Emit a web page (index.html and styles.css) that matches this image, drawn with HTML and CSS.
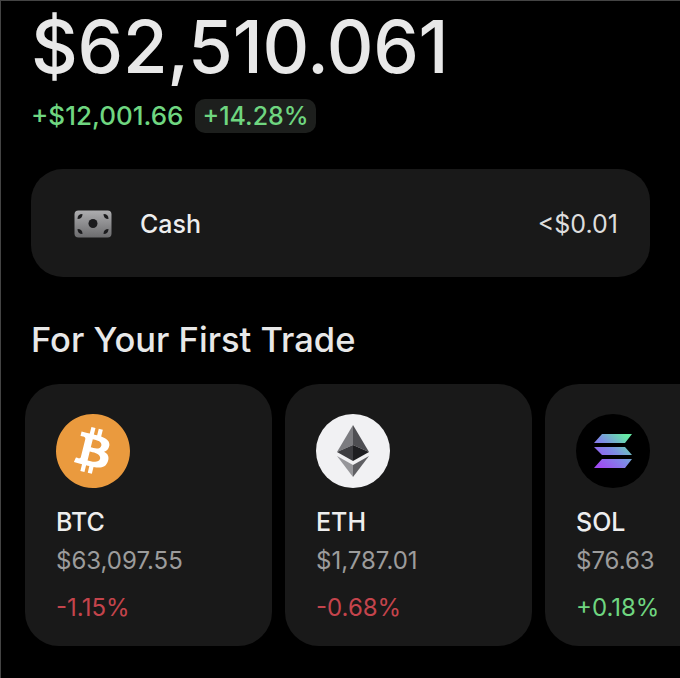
FILE: index.html
```html
<!DOCTYPE html>
<html lang="en">
<head>
  <meta charset="UTF-8">
  <meta name="viewport" content="width=device-width, initial-scale=1">
  <title>Portfolio</title>
  <link rel="stylesheet" href="styles.css">
</head>
<body>

  <!-- Balance -->
  <div class="balance">
    <div class="balance-value">$62,510.061</div>
    <div class="balance-change">
      <span class="change-amount">+$12,001.66</span>
      <span class="change-pill">+14.28%</span>
    </div>
  </div>

  <!-- Cash -->
  <div class="cash">
    <svg class="cash-icon" width="38" height="28" viewBox="0 0 38 28">
      <defs>
        <linearGradient id="bill" x1="0" y1="0" x2="0" y2="1">
          <stop offset="0" stop-color="#adadaf"/>
          <stop offset="1" stop-color="#6c6c6e"/>
        </linearGradient>
      </defs>
      <rect x="0.5" y="0.5" width="37" height="27" rx="4" fill="url(#bill)"/>
      <circle cx="19" cy="13.500" r="4.500" fill="#1b1b1d"/>
      <path d="M3.500 9 Q3.500 4 8.500 4 Q8.500 9 3.500 9Z M34.500 9 Q34.500 4 29.500 4 Q29.500 9 34.500 9Z M3.500 19 Q3.500 24 8.500 24 Q8.500 19 3.500 19Z M34.500 19 Q34.500 24 29.500 24 Q29.500 19 34.500 19Z" fill="#1b1b1d"/>
    </svg>
    <span class="cash-label">Cash</span>
    <span class="cash-value">&lt;$0.01</span>
  </div>

  <h2 class="section-title">For Your First Trade</h2>

  <div class="trades">
    <div class="trade-card">
      <svg class="coin" width="74" height="74" viewBox="0 0 24 24">
        <circle cx="12" cy="12" r="9" fill="#fff"/>
        <path fill="#ea9a3e" d="M23.638 14.904c-1.602 6.43-8.113 10.34-14.542 8.736C2.67 22.05-1.244 15.525.362 9.105 1.962 2.67 8.475-1.243 14.9.358c6.43 1.605 10.342 8.115 8.738 14.548v-.002zm-6.35-4.613c.24-1.59-.974-2.45-2.64-3.03l.54-2.153-1.315-.33-.525 2.107c-.345-.087-.705-.167-1.064-.25l.526-2.127-1.32-.33-.54 2.165c-.285-.067-.565-.132-.84-.2l-1.815-.45-.35 1.407s.975.225.955.236c.535.136.63.486.615.766l-1.477 5.92c-.075.166-.24.406-.614.314.015.02-.96-.24-.96-.24l-.66 1.51 1.71.426.93.242-.54 2.19 1.32.327.54-2.17c.36.1.705.19 1.05.273l-.51 2.154 1.32.33.545-2.19c2.24.427 3.93.257 4.64-1.774.57-1.637-.03-2.58-1.217-3.196.854-.193 1.5-.76 1.68-1.93h.01zm-3.01 4.22c-.404 1.64-3.157.75-4.05.53l.72-2.9c.896.23 3.757.67 3.33 2.37zm.41-4.24c-.37 1.49-2.662.735-3.405.55l.654-2.64c.744.18 3.137.524 2.75 2.084v.006z"/>
      </svg>
      <div class="coin-name">BTC</div>
      <div class="coin-price">$63,097.55</div>
      <div class="coin-change down">-1.15%</div>
    </div>

    <div class="trade-card">
      <svg class="coin" width="74" height="74" viewBox="0 0 74 74">
        <circle cx="37" cy="37" r="37" fill="#f1f1f3"/>
        <path d="M37 11 L21 38 L37 31Z" fill="#7c7c80"/>
        <path d="M37 11 L53 38 L37 31Z" fill="#4e4e52"/>
        <path d="M21 38 L37 31 L37 47Z" fill="#3d3d41"/>
        <path d="M53 38 L37 31 L37 47Z" fill="#1e1e21"/>
        <path d="M21 42 L37 51 L37 63Z" fill="#96969a"/>
        <path d="M53 42 L37 51 L37 63Z" fill="#5f5f63"/>
      </svg>
      <div class="coin-name">ETH</div>
      <div class="coin-price">$1,787.01</div>
      <div class="coin-change down">-0.68%</div>
    </div>

    <div class="trade-card">
      <svg class="coin" width="74" height="74" viewBox="0 0 74 74">
        <defs>
          <linearGradient id="sol" x1="0" y1="1" x2="1" y2="0">
            <stop offset="0.1" stop-color="#a04cf2"/>
            <stop offset="0.5" stop-color="#7d8be6"/>
            <stop offset="0.9" stop-color="#66eba4"/>
          </linearGradient>
        </defs>
        <circle cx="37" cy="37" r="37" fill="#000"/>
        <path fill="url(#sol)" d="M26 20 H56 L49 29 H18Z M18 33 H49 L56 41 H26Z M26 45 H56 L49 54 H18Z"/>
      </svg>
      <div class="coin-name">SOL</div>
      <div class="coin-price">$76.63</div>
      <div class="coin-change up">+0.18%</div>
    </div>
  </div>

</body>
</html>
```

FILE: styles.css
```css
body {
  font-family: 'Inter', 'Liberation Sans', sans-serif;
  background: #000;
  color: #fff;
  margin: 0;
  height: 678px;
  overflow: hidden;
  box-shadow: inset 1px 1px 0 #444;
}
.balance {
  padding: 7px 0 0 31px;
}
.balance-value {
  font-size: 72.500px;
  line-height: 80px;
  font-weight: 550;
  color: #e8e8e8;
  letter-spacing: -0.3px;
}
.balance-change {
  display: flex;
  align-items: center;
  gap: 12px;
  margin-top: 12px;
  font-size: 26px;
  line-height: 34px;
  font-weight: 500;
  color: #6fd680;
}
.change-pill {
  background: #1d1f1d;
  border-radius: 10px;
  padding: 0 7px;
  font-size: 25px;
}
.cash {
  display: flex;
  align-items: center;
  box-sizing: border-box;
  height: 108px;
  margin: 36px 30px 0 31px;
  padding: 2px 32px 0 43px;
  background: #191919;
  border-radius: 32px;
  font-size: 25px;
}
.cash-label {
  margin-left: 28px;
  font-weight: 500;
  color: #eee;
}
.cash-value {
  margin-left: auto;
  color: #ddd;
}
.section-title {
  margin: 43px 0 24px 31px;
  font-size: 34.500px;
  line-height: 40px;
  font-weight: 500;
  color: #e8e8e8;
}
.trades {
  display: flex;
  gap: 13px;
  margin-left: 25px;
}
.trade-card {
  flex: none;
  width: 247px;
  height: 262px;
  box-sizing: border-box;
  padding: 30px 0 0 31px;
  background: #191919;
  border-radius: 34px;
}
.coin {
  display: block;
}
.coin-name {
  margin-top: 19px;
  font-size: 25px;
  line-height: 30px;
  font-weight: 500;
  color: #eee;
}
.coin-price {
  margin-top: 9px;
  font-size: 24px;
  line-height: 30px;
  color: #9c9c9c;
}
.coin-change {
  margin-top: 17px;
  font-size: 24px;
  line-height: 30px;
}
.down {
  color: #c4444c;
}
.up {
  color: #6fd680;
}
```
